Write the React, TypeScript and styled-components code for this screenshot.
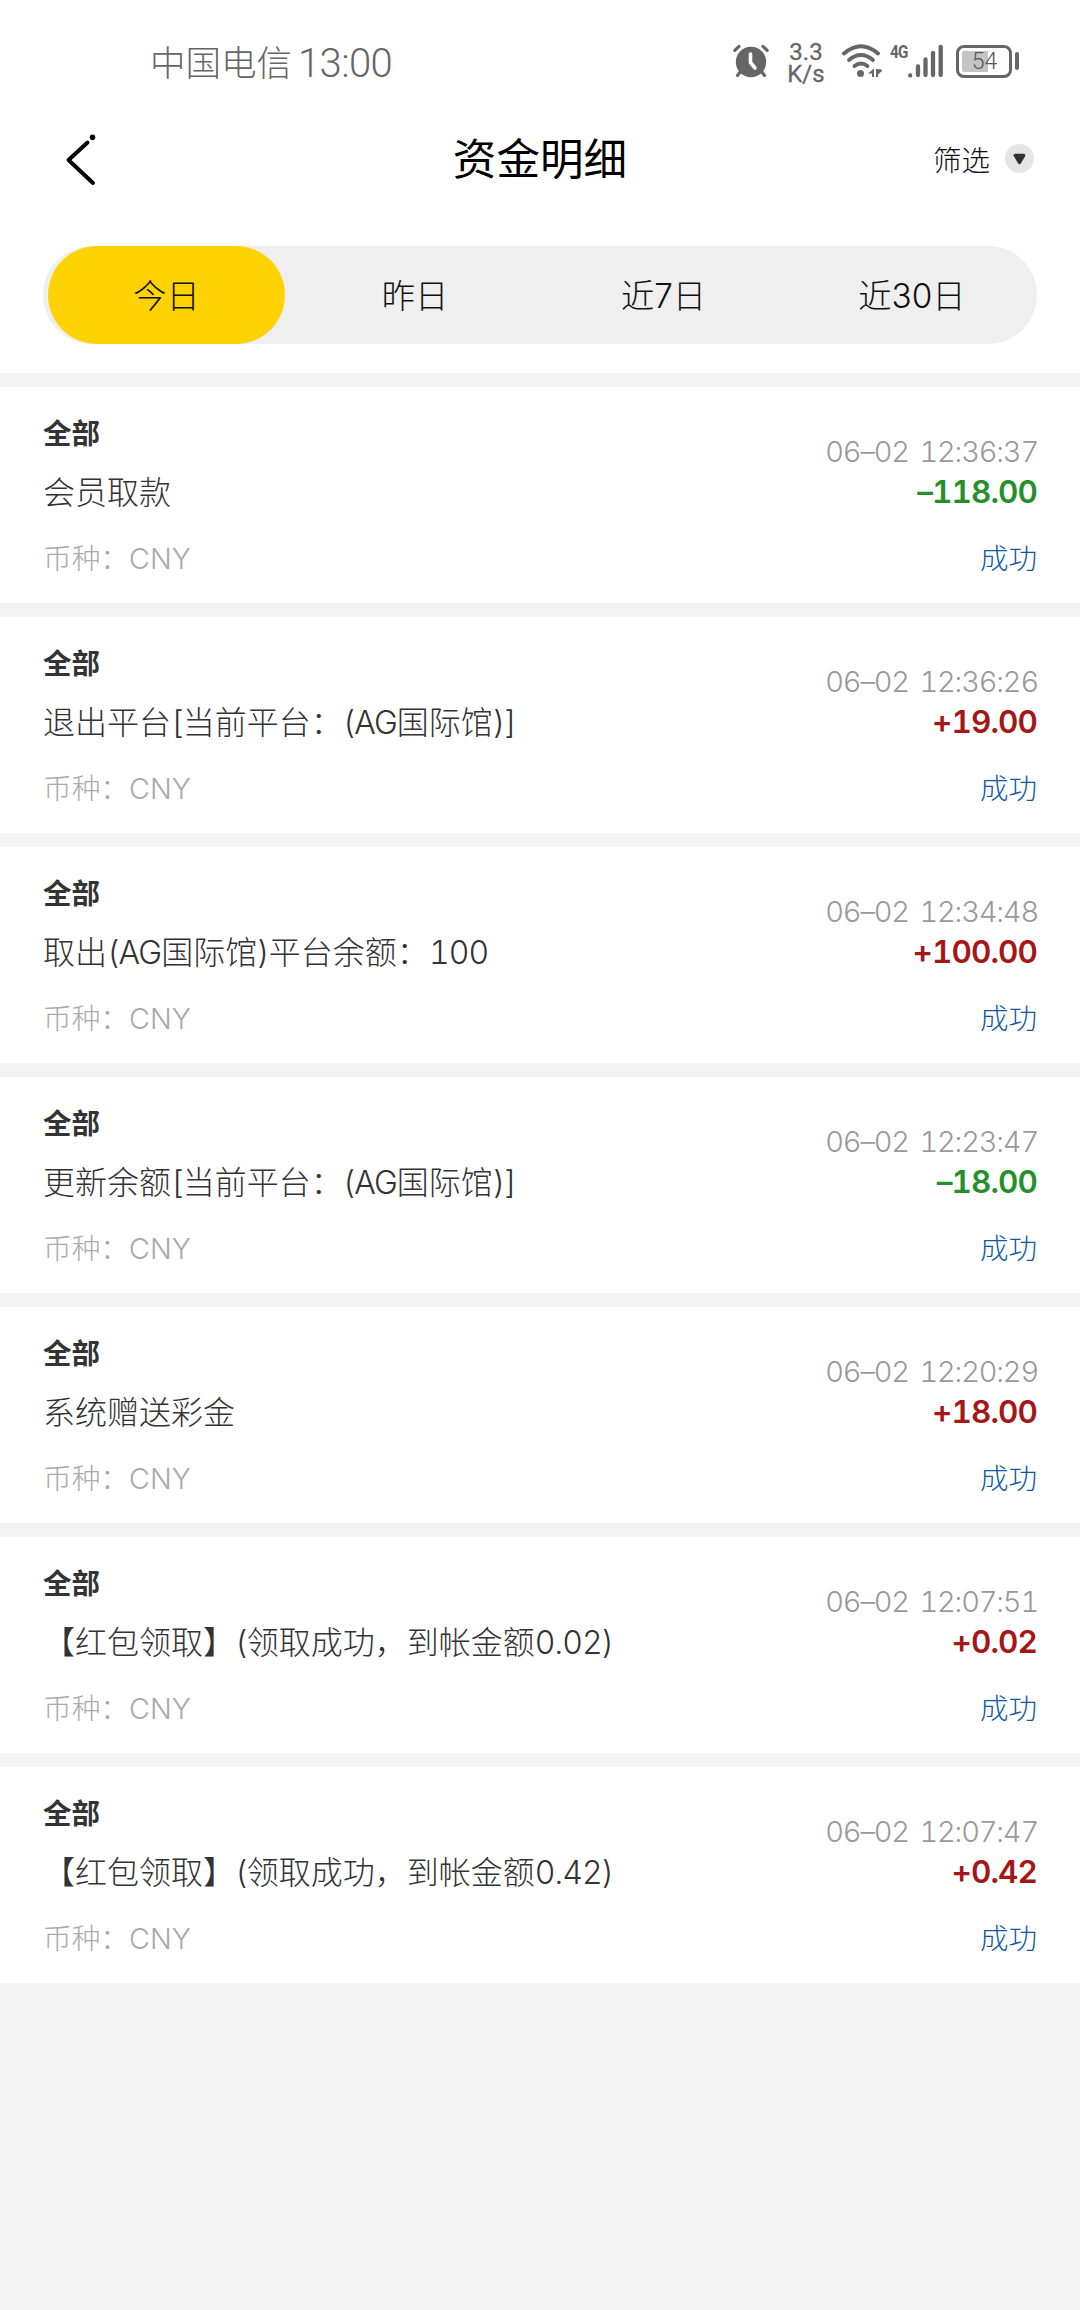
import React from "react";
import styled, { createGlobalStyle } from "styled-components";

const GlobalStyle = createGlobalStyle`
  body {
    margin: 0;
    background: #f3f3f3;
    font-family: Inter, "Noto Sans CJK SC", sans-serif;
    font-weight: 300;
    color: #333;
  }
`;

const Page = styled.div`
  width: 1080px;
  min-height: 2310px;
  background: #f3f3f3;
`;

const StatusBar = styled.header`
  height: 122px;
  box-sizing: border-box;
  padding: 0 61px 0 150px;
  display: flex;
  align-items: center;
  background: #fff;
  color: #666;
`;

const Carrier = styled.div`
  flex: 1;
  display: flex;
  align-items: center;
  gap: 6px;
  font-size: 35.5px;
  line-height: 50px;
  padding-top: 5px;
`;

const Clock = styled.span`
  font-family: Roboto, sans-serif;
  font-size: 40px;
  letter-spacing: -0.6px;
`;

const StatusIcon = styled.svg<{ $left?: number }>`
  flex: none;
  margin-left: ${(p) => p.$left ?? 0}px;
`;

const NetSpeed = styled.div`
  width: 38px;
  margin-left: 18px;
  margin-right: 1px;
  padding-top: 3px;
  display: flex;
  flex-direction: column;
  align-items: center;
  font-family: Roboto, sans-serif;
  font-weight: 400;
  font-size: 24px;
  line-height: 22px;
  white-space: nowrap;
  -webkit-text-stroke: 0.3px #666;
`;

const NetType = styled.span`
  width: 18px;
  margin-left: 7px;
  padding-bottom: 18px;
  font-family: Roboto, sans-serif;
  font-weight: 700;
  font-size: 18px;
  line-height: 16px;
  letter-spacing: -1px;
  transform: scaleX(0.85);
  transform-origin: left;
`;

const Battery = styled.div`
  width: 56px;
  height: 33px;
  box-sizing: border-box;
  margin-left: 13px;
  padding: 3px;
  border: 3px solid #666;
  border-radius: 8px;
  display: flex;
`;

const BatteryLevel = styled.div`
  width: 44px;
  box-sizing: border-box;
  padding-left: 1px;
  border-radius: 2px;
  background: linear-gradient(to right, #c4c4c4 60%, transparent 60%);
  font-family: Roboto, sans-serif;
  font-size: 23px;
  line-height: 22px;
  text-align: center;
  color: #555;
`;

const BatteryTip = styled.div`
  width: 4px;
  height: 18px;
  margin-left: 3px;
  border-radius: 2px;
  background: #666;
`;

const NavBar = styled.nav`
  height: 124px;
  box-sizing: border-box;
  padding: 0 46px 48px 65px;
  display: grid;
  grid-template-columns: 102px 1fr 121px;
  align-items: center;
  background: #fff;
  color: #000;
`;

const Title = styled.h1`
  margin: 0;
  font-size: 43.6px;
  line-height: 60px;
  font-weight: 400;
  text-align: center;
`;

const Filter = styled.button`
  border: 0;
  padding: 0 0 3px;
  background: none;
  font: inherit;
  font-size: 28.5px;
  color: #111;
  display: flex;
  align-items: center;
  justify-content: flex-end;
  gap: 15px;
  white-space: nowrap;
`;

const TabsPanel = styled.section`
  padding: 0 43px 29px;
  background: #fff;
`;

const Tabs = styled.div`
  height: 98px;
  border-radius: 49px;
  background: #efefef;
  display: grid;
  grid-template-columns: repeat(4, 1fr);
`;

const Tab = styled.button<{ $active?: boolean }>`
  border: 0;
  margin: 0 6.5px 0 5px;
  padding: 0 0 3px 0;
  border-radius: 49px;
  background: ${(p) => (p.$active ? "#ffd303" : "transparent")};
  font: inherit;
  font-size: 33.3px;
  color: #111;
`;

const List = styled.main`
  padding-top: 14px;
  display: flex;
  flex-direction: column;
  gap: 14px;
`;

const Card = styled.article`
  height: 216px;
  box-sizing: border-box;
  padding: 0 43px;
  background: #fff;
  display: flex;
  justify-content: space-between;
`;

const Info = styled.div`
  padding-top: 27px;
`;

const Kind = styled.div`
  font-size: 28.5px;
  line-height: 40px;
  font-weight: 700;
`;

const Description = styled.div`
  font-size: 32px;
  line-height: 78px;
  white-space: nowrap;
`;

const Latin = styled.span`
  font-variant-numeric: tabular-nums;
  letter-spacing: -0.9px;
`;

const Currency = styled.div`
  font-size: 28.7px;
  line-height: 54px;
  color: #aaa;
`;

const Result = styled.div`
  padding-top: 45px;
  text-align: right;
  font-variant-numeric: tabular-nums;
`;

const Time = styled.div`
  font-size: 29px;
  line-height: 40px;
  letter-spacing: -1.2px;
  word-spacing: 4px;
  margin-right: -1px;
  color: #999;
`;

const Amount = styled.div<{ $income: boolean }>`
  font-size: 31.5px;
  line-height: 40px;
  font-weight: 600;
  letter-spacing: -0.9px;
  color: ${(p) => (p.$income ? "#a51717" : "#23902a")};
`;

const State = styled.div`
  margin-top: 19px;
  font-size: 28.5px;
  line-height: 56px;
  color: #1259a5;
`;

interface Entry {
  text: string;
  time: string;
  amount: string;
}

const entries: Entry[] = [
  { text: "会员取款", time: "06–02 12:36:37", amount: "–118.00" },
  { text: "退出平台[当前平台：(AG国际馆)]", time: "06–02 12:36:26", amount: "+19.00" },
  { text: "取出(AG国际馆)平台余额：100", time: "06–02 12:34:48", amount: "+100.00" },
  { text: "更新余额[当前平台：(AG国际馆)]", time: "06–02 12:23:47", amount: "–18.00" },
  { text: "系统赠送彩金", time: "06–02 12:20:29", amount: "+18.00" },
  { text: "【红包领取】(领取成功，到帐金额0.02)", time: "06–02 12:07:51", amount: "+0.02" },
  { text: "【红包领取】(领取成功，到帐金额0.42)", time: "06–02 12:07:47", amount: "+0.42" },
];

const tabs = ["今日", "昨日", "近7日", "近30日"];

// Latin runs are set a little tighter than the Chinese text around them.
const MixedText = ({ text }: { text: string }) => (
  <>
    {text
      .split(/([\x20-\x7e]+)/)
      .map((part, i) => (i % 2 ? <Latin key={i}>{part}</Latin> : part))}
  </>
);

const AlarmIcon = () => (
  <StatusIcon width="36" height="34" viewBox="0 0 36 34">
    <circle cx="18" cy="18" r="15.2" fill="#666" />
    <path d="M1.800 6.300 6 2.400M34.200 6.300 30 2.400M4.500 31.500 8 27M31.500 31.500 28 27" stroke="#666" strokeWidth="3.2" strokeLinecap="round" />
    <path d="M17.500 10V18.500L22 24" fill="none" stroke="#fff" strokeWidth="3.600" strokeLinecap="round" strokeLinejoin="round" />
  </StatusIcon>
);

const WifiIcon = () => (
  <StatusIcon $left={16} width="41" height="34" viewBox="0 0 41 34">
    <g fill="none" stroke="#666" strokeWidth="3.800" strokeLinecap="round">
      <path d="M2 9.500Q19 -5 36 9.500" />
      <path d="M7 16Q19 6 31 16" />
      <path d="M12.500 22Q19 17 25.500 22" />
    </g>
    <circle cx="18.500" cy="29.500" r="3.500" fill="#666" />
    <path d="M26 29.500 32 24.500V33H30V29.500ZM34 25V33H36V30.500L40 27 39.500 25.500Z" fill="#666" />
  </StatusIcon>
);

const SignalIcon = () => (
  <StatusIcon width="35" height="34" viewBox="0 0 35 34">
    <path d="M2.200 31.500V31.600M10 31V22.500M17.500 31V15.500M25 31V9M32.700 31V3" stroke="#666" strokeWidth="4.300" strokeLinecap="round" />
  </StatusIcon>
);

const BackIcon = () => (
  <svg width="32" height="52" viewBox="0 0 32 52">
    <path d="M22.500 8.500 3.500 26 28 49" fill="none" stroke="#000" strokeWidth="4" strokeLinecap="round" strokeLinejoin="round" />
    <circle cx="27.500" cy="3.300" r="2.800" />
  </svg>
);

const DropIcon = () => (
  <svg width="29" height="29" viewBox="0 0 29 29">
    <circle cx="14.500" cy="14.500" r="14.500" fill="#e5e5e5" />
    <path d="M10.300 11.500H18.700L14.500 18.500Z" fill="#333" stroke="#333" strokeWidth="3.400" strokeLinejoin="round" />
  </svg>
);

export default function App() {
  return (
    <Page>
      <GlobalStyle />
      <StatusBar>
        <Carrier>
          中国电信<Clock>13:00</Clock>
        </Carrier>
        <AlarmIcon />
        <NetSpeed>
          <span>3.3</span>
          <span>K/s</span>
        </NetSpeed>
        <WifiIcon />
        <NetType>4G</NetType>
        <SignalIcon />
        <Battery>
          <BatteryLevel>54</BatteryLevel>
        </Battery>
        <BatteryTip />
      </StatusBar>
      <NavBar>
        <BackIcon />
        <Title>资金明细</Title>
        <Filter>
          筛选
          <DropIcon />
        </Filter>
      </NavBar>
      <TabsPanel>
        <Tabs>
          {tabs.map((label, i) => (
            <Tab key={label} $active={i === 0}>
              {label}
            </Tab>
          ))}
        </Tabs>
      </TabsPanel>
      <List>
        {entries.map((e) => (
          <Card key={e.time}>
            <Info>
              <Kind>全部</Kind>
              <Description>
                <MixedText text={e.text} />
              </Description>
              <Currency>币种：CNY</Currency>
            </Info>
            <Result>
              <Time>{e.time}</Time>
              <Amount $income={e.amount.startsWith("+")}>{e.amount}</Amount>
              <State>成功</State>
            </Result>
          </Card>
        ))}
      </List>
    </Page>
  );
}
